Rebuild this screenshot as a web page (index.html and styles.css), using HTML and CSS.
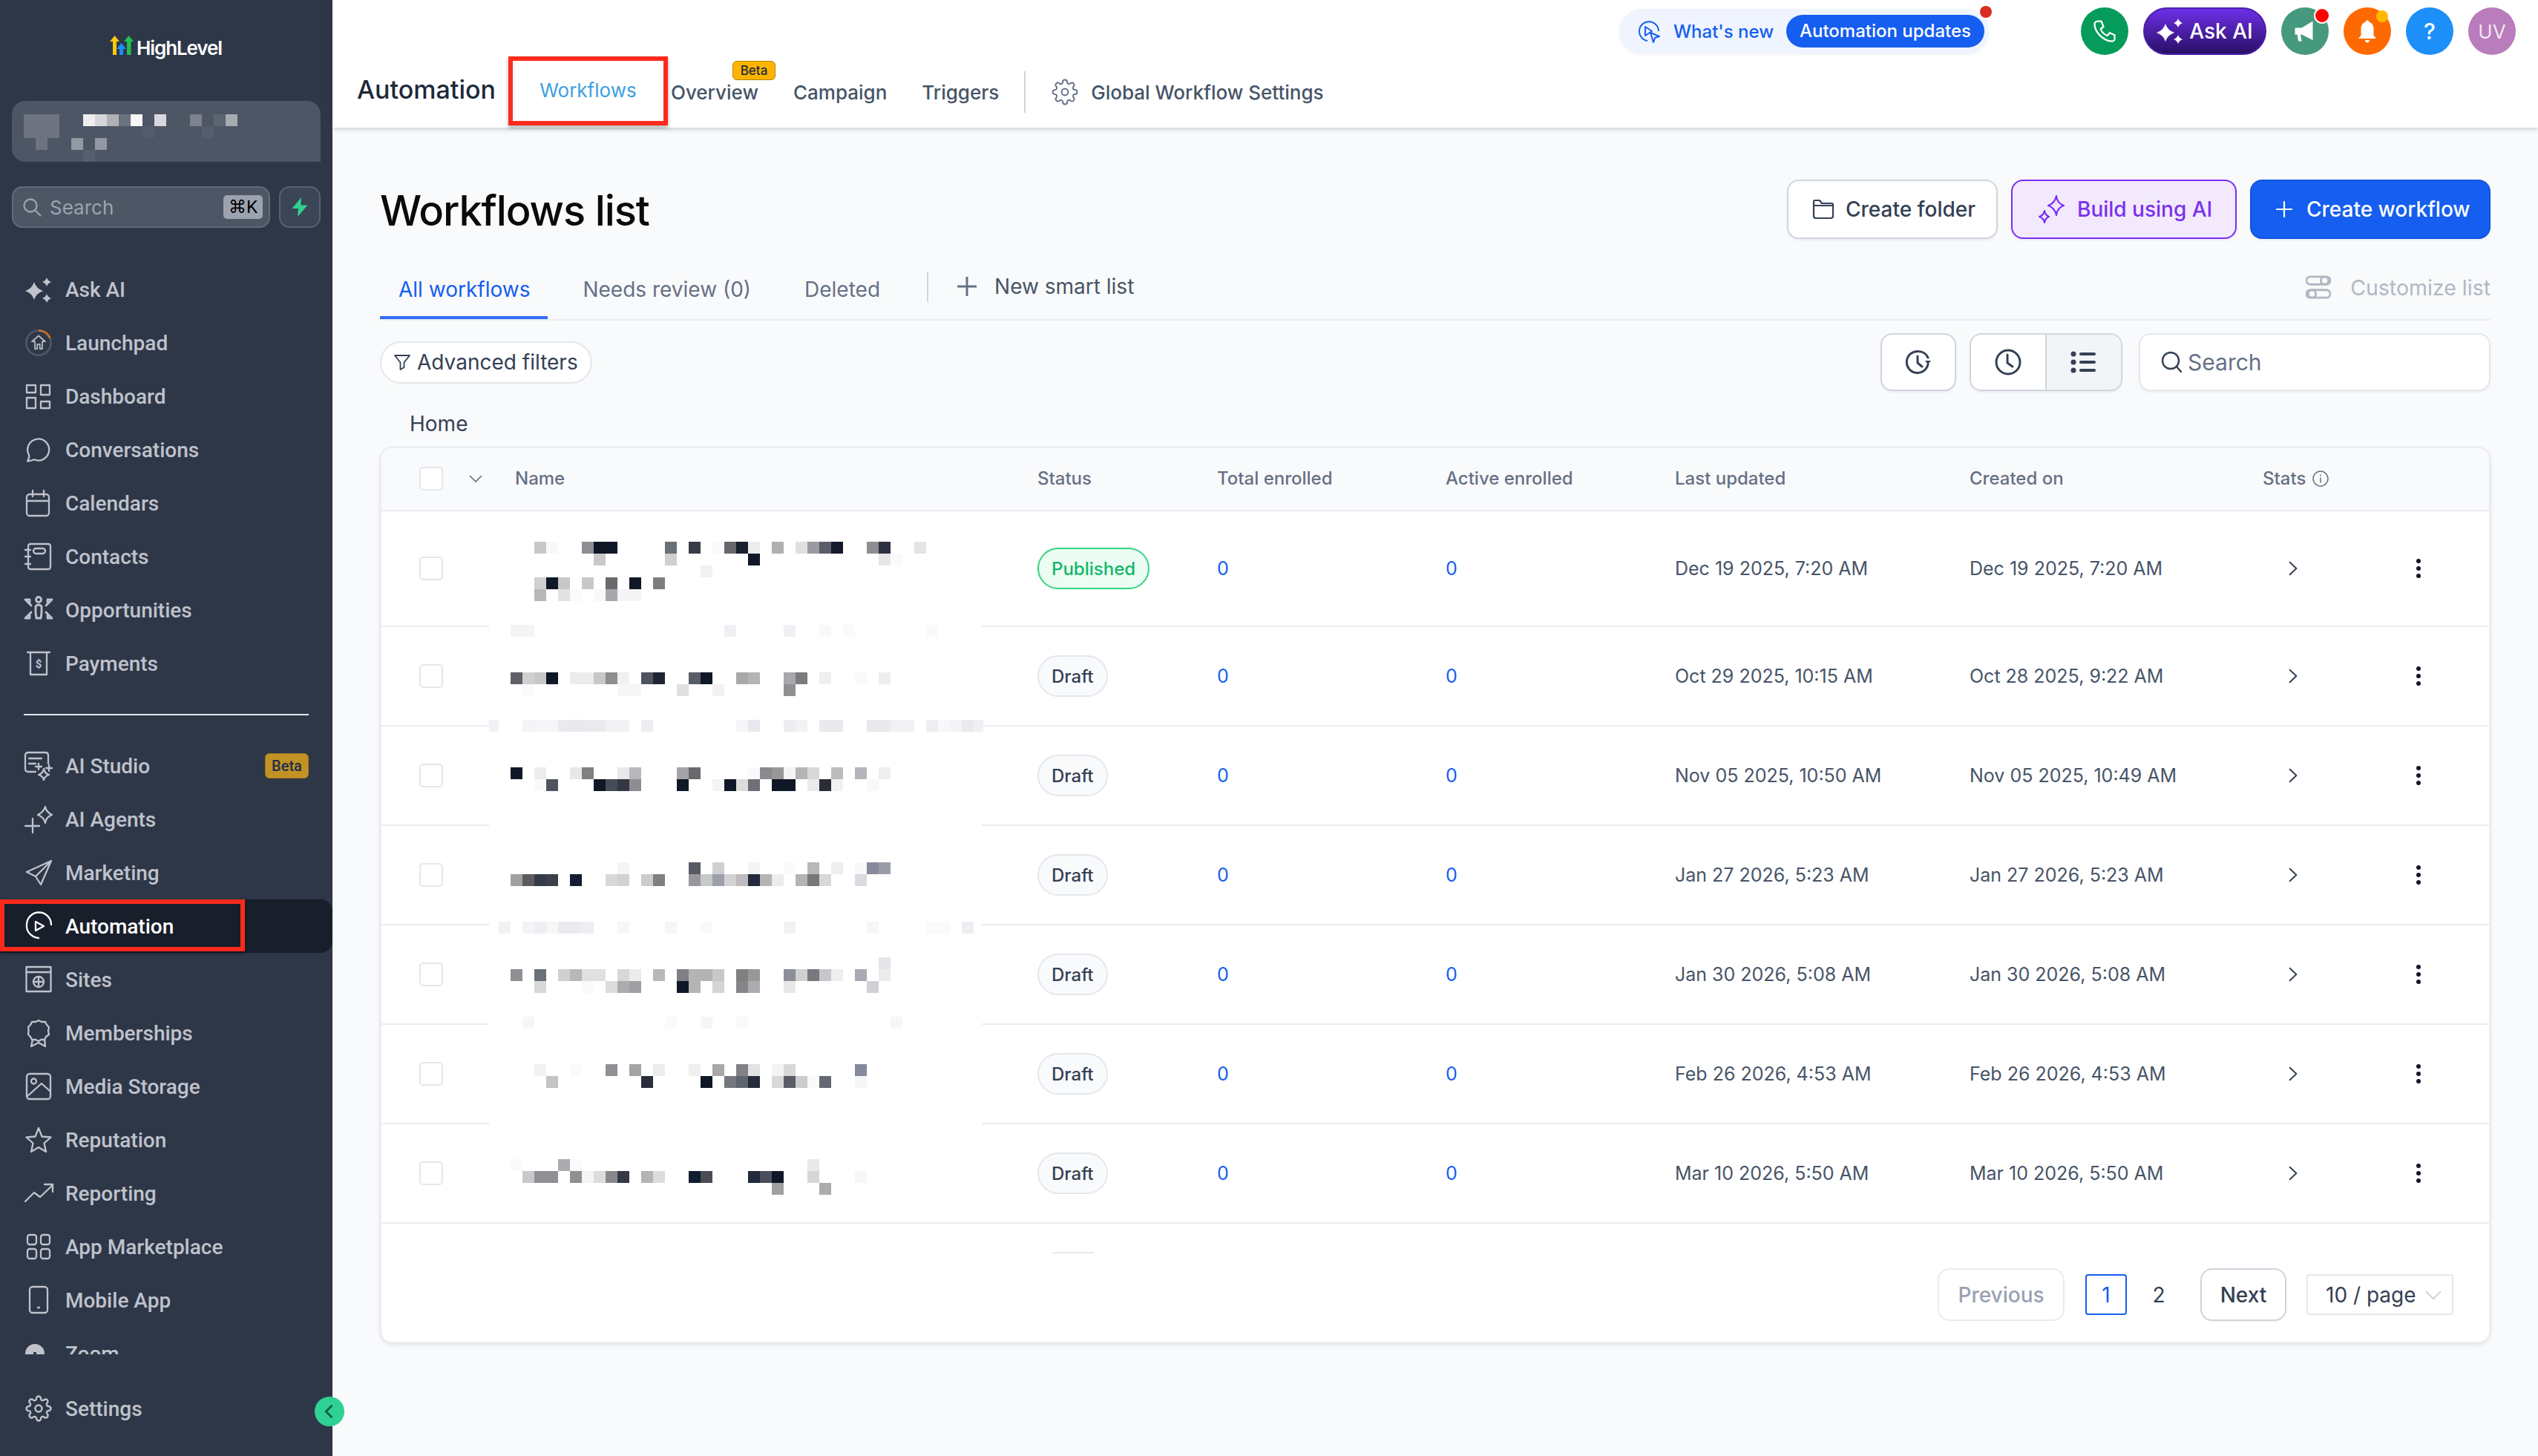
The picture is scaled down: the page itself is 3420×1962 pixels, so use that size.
FILE: index.html
```html
<!DOCTYPE html>
<html lang="en">
<head>
<meta charset="utf-8">
<title>Workflows list</title>
<link rel="stylesheet" href="styles.css">
</head>
<body>
<svg class="defs" aria-hidden="true">
  <symbol id="gear" viewBox="0 0 24 24"><circle cx="12" cy="12" r="3"/><path d="M19.4 15a1.65 1.65 0 0 0 .33 1.82l.06.06a2 2 0 0 1 0 2.83 2 2 0 0 1-2.83 0l-.06-.06a1.65 1.65 0 0 0-1.82-.33 1.65 1.65 0 0 0-1 1.51V21a2 2 0 0 1-2 2 2 2 0 0 1-2-2v-.09A1.65 1.65 0 0 0 9 19.4a1.65 1.65 0 0 0-1.82.33l-.06.06a2 2 0 0 1-2.83 0 2 2 0 0 1 0-2.83l.06-.06a1.65 1.65 0 0 0 .33-1.82 1.65 1.65 0 0 0-1.51-1H3a2 2 0 0 1-2-2 2 2 0 0 1 2-2h.09A1.65 1.65 0 0 0 4.6 9a1.65 1.65 0 0 0-.33-1.82l-.06-.06a2 2 0 0 1 0-2.83 2 2 0 0 1 2.83 0l.06.06a1.65 1.65 0 0 0 1.82.33H9a1.65 1.65 0 0 0 1-1.51V3a2 2 0 0 1 2-2 2 2 0 0 1 2 2v.09a1.65 1.65 0 0 0 1 1.51 1.65 1.65 0 0 0 1.82-.33l.06-.06a2 2 0 0 1 2.83 0 2 2 0 0 1 0 2.83l-.06.06a1.65 1.65 0 0 0-.33 1.82V9a1.65 1.65 0 0 0 1.51 1H21a2 2 0 0 1 2 2 2 2 0 0 1-2 2h-.09a1.65 1.65 0 0 0-1.51 1z"/></symbol>
  <symbol id="chev-r" viewBox="0 0 20 20"><path d="M6 2.500 14 10 6 17.500"/></symbol>
  <symbol id="dots" viewBox="0 0 8 28"><circle cx="4" cy="4" r="3"/><circle cx="4" cy="14" r="3"/><circle cx="4" cy="24" r="3"/></symbol>
</svg>
<div class="app">
  <aside class="sidebar">
    <div class="logo">
      <svg class="logo-mark" viewBox="0 0 34 28"><path fill="#fdc70c" d="M0 8 6.500 0 13 8H9V26H4V8Z"/><path fill="#1c8ff8" d="M9 18 15.500 10 22 18H18V26H13V18Z"/><path fill="#1fc24f" d="M19 8 25.500 0 32 8H28.500V26H23V8Z"/></svg>
      <span class="logo-text">HighLevel</span>
    </div>
    <div class="account">
      <svg class="mosaic" viewBox="16 136 416 82" width="416" height="82"><path fill="#6d7480" d="M32 154H80V186H64V202H48V186H32Z"/><rect x="112" y="154" fill="#eeeeee"/><rect x="128" y="154" fill="#d5d6d9"/><rect x="144" y="154" fill="#b0b1b5"/><rect x="160" y="154" fill="#6a7280"/><rect x="176" y="154" fill="#f8f8f8"/><rect x="208" y="154" fill="#d8d9dc"/><rect x="256" y="154" fill="#7d828c"/><rect x="288" y="154" fill="#5c6472"/><rect x="304" y="154" fill="#a8abb0"/><rect x="192" y="170" fill="#535c6a"/><rect x="272" y="170" fill="#555e6c"/><rect x="96" y="186" fill="#9399a2"/><rect x="128" y="186" fill="#9399a2"/><rect x="112" y="202" fill="#555e6c"/></svg>
    </div>
    <div class="quick">
      <div class="side-search">
        <svg class="i-stroke side-search-icon" viewBox="0 0 26 26"><circle cx="11" cy="11" r="8.500"/><path d="m17.500 17.500 7 7"/></svg>
        <span class="side-search-text">Search</span>
        <kbd class="kbd">⌘K</kbd>
      </div>
      <div class="bolt-btn"><svg viewBox="0 0 22 26" width="22" height="26"><path fill="#2fd18f" d="M13 0 0.500 15H9L8 26 21.500 10.500H12.500Z"/></svg></div>
    </div>
    <nav class="nav">
      <a class="nav-item"><svg class="nav-icon i-fill" viewBox="0 0 36 36"><path d="M12 8 Q15 17 24 20 Q15 23 12 32 Q9 23 0 20 Q9 17 12 8Z"/><path d="M29 2 Q30.500 6.500 35 8 Q30.500 9.500 29 14 Q27.500 9.500 23 8 Q27.500 6.500 29 2Z"/><path d="M29 24 Q30.500 28.500 35 30 Q30.500 31.500 29 36 Q27.500 31.500 23 30 Q27.500 28.500 29 24Z"/></svg><span>Ask AI</span></a>
      <a class="nav-item"><svg class="nav-icon launch" viewBox="0 0 40 40"><circle cx="20" cy="20" r="18.500" stroke="#4d5665"/><path d="M20 1.500A18.500 18.500 0 0 1 37.200 13" stroke="#c46e2c"/><path d="M20 9.500 30 18H25.500V29H22V22H18V29H14.500V18H10Z" stroke="#b6bac4" class="launch-arrow"/></svg><span>Launchpad</span></a>
      <a class="nav-item"><svg class="nav-icon i-stroke" viewBox="0 0 36 36"><rect x="2" y="3" width="12" height="10"/><rect x="21" y="3" width="12" height="13"/><rect x="2" y="20" width="12" height="14"/><rect x="21" y="25" width="12" height="9"/></svg><span>Dashboard</span></a>
      <a class="nav-item"><svg class="nav-icon i-stroke" viewBox="0 0 36 36"><path d="M3 33.500C5 30 5.500 27 5 25A14.500 14.500 0 1 1 12 31.300C9 32.500 6 33.300 3 33.500Z"/></svg><span>Conversations</span></a>
      <a class="nav-item"><svg class="nav-icon i-stroke" viewBox="0 0 36 36"><rect x="2" y="6" width="30" height="29" rx="4"/><path d="M2 15H32M10 1V9M25 1V9"/></svg><span>Calendars</span></a>
      <a class="nav-item"><svg class="nav-icon i-stroke" viewBox="0 0 36 36"><rect x="4" y="1" width="30" height="34" rx="3"/><rect x="11" y="7" width="16" height="7" rx="3.500"/><path d="M0 9H7M0 18H7M0 28H7"/></svg><span>Contacts</span></a>
      <a class="nav-item"><svg class="nav-icon i-stroke opp" viewBox="0 0 36 36"><circle cx="18" cy="4" r="3.500"/><path d="M14 13Q18 9 22 13V22L21 29H15L14 22Z"/><path d="M0 4H6V10M1 5 8 12M36 4H30V10M35 5 28 12M0 29H6V23M1 28 8 21M36 29H30V23M35 28 28 21"/></svg><span>Opportunities</span></a>
      <a class="nav-item"><svg class="nav-icon i-stroke" viewBox="0 0 36 36"><path d="M3 3H33M7 3V33H29V3"/><text class="pay-sign" x="18" y="24" text-anchor="middle">$</text></svg><span>Payments</span></a>
      <div class="nav-divider"></div>
      <a class="nav-item"><svg class="nav-icon i-stroke" viewBox="0 0 36 36"><path d="M14 26H4Q0 26 0 22V4Q0 0 4 0H27Q31 0 31 4V15"/><path d="M5 8H22M5 15H14"/><path d="M18 15V23M14 19H22M32 17V25M28 21H36M25 22Q26 28 32 30Q26 32 25 37Q24 32 18 30Q24 28 25 22Z"/></svg><span>AI Studio</span><span class="side-beta">Beta</span></a>
      <a class="nav-item"><svg class="nav-icon i-stroke" viewBox="0 0 36 36"><path d="M10 17V36M0 27H19"/><path d="M27 1Q28 8 36 12Q28 15 27 23Q25 15 17 12Q25 8 27 1Z"/></svg><span>AI Agents</span></a>
      <a class="nav-item"><svg class="nav-icon i-stroke" viewBox="0 0 36 36"><path d="M35 2 2 17 14 23 21 34ZM35 2 14 23"/></svg><span>Marketing</span></a>
      <a class="nav-item is-active"><svg class="nav-icon i-stroke" viewBox="0 0 36 36"><path d="M35 16A16.500 16.500 0 0 0 2 16C1 25 8 33 18 34"/><path d="M14 12V24L25 18Z"/></svg><span>Automation</span><span class="side-mark"></span></a>
      <a class="nav-item"><svg class="nav-icon i-stroke" viewBox="0 0 36 36"><rect x="1.500" y="1" width="33" height="33"/><path d="M1.500 8H34.500"/><circle cx="18" cy="21" r="7"/><path d="M11 21H25M18 14V28"/></svg><span>Sites</span></a>
      <a class="nav-item"><svg class="nav-icon i-stroke" viewBox="0 0 36 36"><path d="M18 1 22 3 27 3 29 7 32 10 31 15 32 20 28 23 26 27H21L18 29 14 27H9L7 23 4 20 4.500 15 4 10 7 7 9 3 14 3Z"/><path d="M10 27 8 36 18 31 27 36 26 27"/></svg><span>Memberships</span></a>
      <a class="nav-item"><svg class="nav-icon i-stroke" viewBox="0 0 36 36"><rect x="2" y="1" width="32" height="34" rx="4"/><circle cx="11.500" cy="11" r="3.500"/><path d="M3 31 22 14 33 24"/></svg><span>Media Storage</span></a>
      <a class="nav-item"><svg class="nav-icon i-stroke" viewBox="0 0 36 36"><path d="M18 2 22.500 13.500 34.500 14.500 25.500 22.500 28 34 18 28 8 34 10.500 22.500 1.500 14.500 13.500 13.500Z"/></svg><span>Reputation</span></a>
      <a class="nav-item"><svg class="nav-icon i-stroke" viewBox="0 0 36 36"><path d="M0 29 12 17 20 23 37 7M26 6H37V16"/></svg><span>Reporting</span></a>
      <a class="nav-item"><svg class="nav-icon i-stroke" viewBox="0 0 36 36"><rect x="3" y="2" width="12" height="13" rx="3"/><rect x="21" y="2" width="12" height="13" rx="3"/><rect x="3" y="21" width="12" height="13" rx="3"/><rect x="21" y="21" width="12" height="13" rx="3"/></svg><span>App Marketplace</span></a>
      <a class="nav-item"><svg class="nav-icon i-stroke" viewBox="0 0 36 36"><rect x="6" y="0" width="24" height="35" rx="4"/><path d="M17 28H19"/></svg><span>Mobile App</span></a>
      <a class="nav-item"><svg class="nav-icon i-fill" viewBox="0 0 36 36"><path fill-rule="evenodd" d="M13 5A13 13 0 1 0 13 31 13 13 0 0 0 13 5ZM11 16H15V20H11Z"/></svg><span>Zoom</span></a>
    </nav>
    <a class="nav-item nav-settings"><svg class="nav-icon i-stroke gear-thin" viewBox="0 0 24 24"><use href="#gear"/></svg><span>Settings</span></a>
    <button class="collapse" type="button" aria-label="Collapse"><svg viewBox="0 0 16 24" width="12" height="20"><path d="M13 2 3 12 13 22"/></svg></button>
  </aside>

  <div class="main">
    <header class="topbar">
      <div class="top-row">
        <div class="news">
          <svg class="news-icon" viewBox="0 0 32 32"><path d="M29 16A13 13 0 1 0 14 29"/><path d="M11 10V22L20 16Z"/><path d="M18 18 30 23 24 25 22 31Z"/></svg>
          <span class="news-label">What's new</span>
          <span class="news-pill">Automation updates</span>
          <span class="news-dot"></span>
        </div>
        <div class="actions">
          <span class="round round-phone"><svg viewBox="0 0 24 24" width="36" height="36"><path d="M6 3 9 3 11 8 8.500 10C9.500 13 11.500 15 14.500 16L16.500 13.500 21 15.500V19C21 20 20 21 19 21 11 21 3 13 3 5.500 3 4 4.500 3 6 3Z"/></svg></span>
          <span class="ask-ai"><svg viewBox="0 0 36 36" width="36" height="36"><path d="M12 8 Q15 17 24 20 Q15 23 12 32 Q9 23 0 20 Q9 17 12 8Z"/><path d="M29 1 Q30.500 5.500 35 7 Q30.500 8.500 29 13 Q27.500 8.500 23 7 Q27.500 5.500 29 1Z"/><path d="M29 23 Q30.500 27.500 35 29 Q30.500 30.500 29 35 Q27.500 30.500 23 29 Q27.500 27.500 29 23Z"/></svg>Ask AI</span>
          <span class="round round-mega"><svg viewBox="0 0 24 24" width="36" height="36"><path d="M3 9H9L19 3V20L9 15H8L9 21H6L5 15H3Z"/></svg><span class="mark mark-red"></span></span>
          <span class="round round-bell"><svg viewBox="0 0 24 24" width="34" height="38"><path d="M12 1.500C13 1.500 13.500 2.300 13.500 3.200 16.500 4 18 6.500 18 10V16L20.500 19H3.500L6 16V10C6 6.500 7.500 4 10.500 3.200 10.500 2.300 11 1.500 12 1.500ZM9.800 20.500H14.200C14 22 13 23 12 23S10 22 9.800 20.500Z"/></svg><span class="mark mark-yellow"></span></span>
          <span class="round round-help">?</span>
          <span class="round round-user">UV</span>
        </div>
      </div>
      <div class="nav-row">
        <span class="app-title">Automation</span>
        <a class="tab-marked">Workflows</a>
        <a class="top-link top-link-first">Overview<span class="top-beta">Beta</span></a>
        <a class="top-link">Campaign</a>
        <a class="top-link">Triggers</a>
        <span class="top-sep"></span>
        <svg class="top-gear" viewBox="0 0 24 24"><use href="#gear"/></svg>
        <a class="top-settings">Global Workflow Settings</a>
      </div>
    </header>

    <main class="content">
      <div class="page-head">
        <h1 class="page-title">Workflows list</h1>
        <div class="page-actions">
          <button class="btn btn-plain" type="button"><svg class="btn-icon" viewBox="0 0 30 30"><path d="M2 24V5Q2 3 4 3H10L13 7H26Q28 7 28 9V24Q28 27 25 27H5Q2 27 2 24ZM2 10H28"/></svg>Create folder</button>
          <button class="btn btn-ai" type="button"><svg class="btn-icon" viewBox="0 0 38 38"><path d="M25 1Q26 11 35 14Q26 17 25 27Q23 17 14 14Q23 11 25 1Z"/><path d="M9 21Q10 27 15 29Q10 31 9 37Q8 31 2 29Q8 27 9 21Z"/></svg>Build using AI</button>
          <button class="btn btn-primary" type="button"><svg class="btn-icon" viewBox="0 0 24 24"><path d="M12 2V22M2 12H22"/></svg>Create workflow</button>
        </div>
      </div>

      <div class="tabs">
        <a class="tab is-current">All workflows</a>
        <a class="tab">Needs review (0)</a>
        <a class="tab">Deleted</a>
        <span class="tab-sep"></span>
        <a class="tab-add"><svg viewBox="0 0 28 28" width="28" height="28"><path d="M14 1V27M1 14H27"/></svg>New smart list</a>
        <a class="customize"><svg viewBox="0 0 36 36" width="34" height="34"><rect x="1" y="3" width="34" height="11" rx="5.500"/><circle cx="27" cy="8.500" r="5.500"/><rect x="1" y="22" width="34" height="11" rx="5.500"/><circle cx="9" cy="27.500" r="5.500"/></svg>Customize list</a>
      </div>

      <div class="toolbar">
        <button class="filter-pill" type="button"><svg viewBox="0 0 24 24" width="24" height="24"><path d="M2 3H22L14.500 12.500V19L9.500 22V12.500Z"/></svg>Advanced filters</button>
        <div class="toolbar-right">
          <button class="icon-btn" type="button"><svg class="clock" viewBox="0 0 36 36"><path d="M31 21A14.500 14.500 0 1 1 18 3.500C24 3.500 29 7 31 12"/><path d="M17 10V19L23 24"/><path d="M27 16 31 21 35 16" class="filled"/></svg></button>
          <div class="segmented">
            <button class="seg" type="button"><svg class="clock" viewBox="0 0 36 36"><circle cx="18" cy="18" r="16"/><path d="M17 8V19L24 24"/></svg></button>
            <button class="seg is-on" type="button"><svg class="list-i" viewBox="0 0 36 36"><circle cx="4" cy="7" r="3.500"/><circle cx="4" cy="18" r="3.500"/><circle cx="4" cy="29" r="3.500"/><rect x="12" y="5" width="22" height="4" rx="2"/><rect x="12" y="16" width="22" height="4" rx="2"/><rect x="12" y="27" width="22" height="4" rx="2"/></svg></button>
          </div>
          <div class="search"><svg viewBox="0 0 28 30" width="28" height="30"><circle cx="13" cy="13" r="11"/><path d="m21 21 6 7"/></svg><span>Search</span></div>
        </div>
      </div>

      <div class="crumb">Home</div>

      <section class="card">
        <div class="row row-head">
          <div class="select"><span class="check"></span><svg class="head-chev" viewBox="0 0 18 12"><path d="M1 2 9 10 17 2"/></svg></div>
          <div>Name</div><div>Status</div><div>Total enrolled</div><div>Active enrolled</div><div>Last updated</div><div>Created on</div>
          <div class="stats-head">Stats<svg viewBox="0 0 24 24" width="24" height="24"><circle cx="12" cy="12" r="10"/><path d="M12 11V17M12 7V8"/></svg></div><div></div>
        </div>
        <div class="row row-tall"><div class="select"><span class="check"></span></div><div></div><div><span class="pill pill-pub">Published</span></div><div class="num">0</div><div class="num">0</div><div>Dec 19 2025, 7:20 AM</div><div>Dec 19 2025, 7:20 AM</div><div><svg class="go" viewBox="0 0 20 20"><use href="#chev-r"/></svg></div><div><svg class="more" viewBox="0 0 8 28"><use href="#dots"/></svg></div></div>
        <div class="row"><div class="select"><span class="check"></span></div><div></div><div><span class="pill">Draft</span></div><div class="num">0</div><div class="num">0</div><div>Oct 29 2025, 10:15 AM</div><div>Oct 28 2025, 9:22 AM</div><div><svg class="go" viewBox="0 0 20 20"><use href="#chev-r"/></svg></div><div><svg class="more" viewBox="0 0 8 28"><use href="#dots"/></svg></div></div>
        <div class="row"><div class="select"><span class="check"></span></div><div></div><div><span class="pill">Draft</span></div><div class="num">0</div><div class="num">0</div><div>Nov 05 2025, 10:50 AM</div><div>Nov 05 2025, 10:49 AM</div><div><svg class="go" viewBox="0 0 20 20"><use href="#chev-r"/></svg></div><div><svg class="more" viewBox="0 0 8 28"><use href="#dots"/></svg></div></div>
        <div class="row"><div class="select"><span class="check"></span></div><div></div><div><span class="pill">Draft</span></div><div class="num">0</div><div class="num">0</div><div>Jan 27 2026, 5:23 AM</div><div>Jan 27 2026, 5:23 AM</div><div><svg class="go" viewBox="0 0 20 20"><use href="#chev-r"/></svg></div><div><svg class="more" viewBox="0 0 8 28"><use href="#dots"/></svg></div></div>
        <div class="row"><div class="select"><span class="check"></span></div><div></div><div><span class="pill">Draft</span></div><div class="num">0</div><div class="num">0</div><div>Jan 30 2026, 5:08 AM</div><div>Jan 30 2026, 5:08 AM</div><div><svg class="go" viewBox="0 0 20 20"><use href="#chev-r"/></svg></div><div><svg class="more" viewBox="0 0 8 28"><use href="#dots"/></svg></div></div>
        <div class="row"><div class="select"><span class="check"></span></div><div></div><div><span class="pill">Draft</span></div><div class="num">0</div><div class="num">0</div><div>Feb 26 2026, 4:53 AM</div><div>Feb 26 2026, 4:53 AM</div><div><svg class="go" viewBox="0 0 20 20"><use href="#chev-r"/></svg></div><div><svg class="more" viewBox="0 0 8 28"><use href="#dots"/></svg></div></div>
        <div class="row"><div class="select"><span class="check"></span></div><div></div><div><span class="pill">Draft</span></div><div class="num">0</div><div class="num">0</div><div>Mar 10 2026, 5:50 AM</div><div>Mar 10 2026, 5:50 AM</div><div><svg class="go" viewBox="0 0 20 20"><use href="#chev-r"/></svg></div><div><svg class="more" viewBox="0 0 8 28"><use href="#dots"/></svg></div></div>

        <div class="pager">
          <button class="page-btn is-disabled" type="button">Previous</button>
          <button class="page-num is-current" type="button">1</button>
          <button class="page-num" type="button">2</button>
          <button class="page-btn page-next" type="button">Next</button>
          <div class="per-page">10 / page<svg viewBox="0 0 22 14" width="22" height="14"><path d="M1 2 11 12 21 2"/></svg></div>
        </div>

        <svg class="mosaic redaction" viewBox="659 604 830 1100" width="830" height="1100" aria-hidden="true">
          <path fill="#ffffff" d="M659 730H1323V1530H659Z"/>
          <path fill="#e8e8ee" d="M1418 1687H1474V1689H1418Z"/>
          <rect x="720" y="730" fill="#c8c8c8"/><rect x="736" y="730" fill="#f8f8f8"/><rect x="784" y="730" fill="#8e8e93"/><rect x="800" y="730" fill="#101828"/><rect x="816" y="730" fill="#101828"/><rect x="896" y="730" fill="#6b7078"/><rect x="928" y="730" fill="#3a3d47"/><rect x="960" y="730" fill="#fafafa"/><rect x="976" y="730" fill="#66666d"/><rect x="992" y="730" fill="#1a2030"/><rect x="1008" y="730" fill="#ececec"/><rect x="1040" y="730" fill="#b0b0b0"/><rect x="1072" y="730" fill="#e0e0e0"/><rect x="1088" y="730" fill="#9a9aa0"/><rect x="1104" y="730" fill="#5a5c68"/><rect x="1120" y="730" fill="#141a2c"/><rect x="1168" y="730" fill="#8e8e90"/><rect x="1184" y="730" fill="#2c3040"/><rect x="1232" y="730" fill="#e4e4e4"/>
          <rect x="800" y="746" fill="#c8c8cc"/><rect x="896" y="746" fill="#d0d0d0"/><rect x="1008" y="746" fill="#101828"/><rect x="1184" y="746" fill="#e6e6e6"/><rect x="1200" y="746" fill="#fafafa"/>
          <rect x="944" y="762" fill="#f2f2f4"/>
          <rect x="720" y="778" fill="#d0d0d0"/><rect x="736" y="778" fill="#101828"/><rect x="752" y="778" fill="#c8c8c8"/><rect x="784" y="778" fill="#c8c8c8"/><rect x="816" y="778" fill="#6a6a6e"/><rect x="848" y="778" fill="#101828"/><rect x="880" y="778" fill="#7e7e82"/>
          <rect x="720" y="794" fill="#b8b8b8"/><rect x="752" y="794" fill="#e2e2e2"/><rect x="768" y="794" fill="#fafafa"/><rect x="800" y="794" fill="#f8f8f8"/><rect x="816" y="794" fill="#a8a8ac"/><rect x="832" y="794" fill="#f4f4f4"/><rect x="848" y="794" fill="#f4f4f4"/>
          <rect x="688" y="842" fill="#f4f4f6"/><rect x="704" y="842" fill="#f4f4f6"/><rect x="976" y="842" fill="#f0f0f4"/><rect x="1056" y="842" fill="#f0f0f4"/><rect x="1104" y="842" fill="#f8f8fa"/><rect x="1136" y="842" fill="#fafafa"/><rect x="1248" y="842" fill="#fafafa"/>
          <rect x="688" y="906" fill="#606066"/><rect x="704" y="906" fill="#d0d0d0"/><rect x="720" y="906" fill="#c8c8c8"/><rect x="736" y="906" fill="#101828"/><rect x="768" y="906" fill="#ececec"/><rect x="784" y="906" fill="#ececec"/><rect x="800" y="906" fill="#c8c8c8"/><rect x="816" y="906" fill="#8e8e90"/><rect x="832" y="906" fill="#f0f0f0"/><rect x="864" y="906" fill="#505460"/><rect x="880" y="906" fill="#1e2432"/><rect x="928" y="906" fill="#5a5c66"/><rect x="944" y="906" fill="#101828"/><rect x="992" y="906" fill="#a8a8a8"/><rect x="1008" y="906" fill="#b4b4b8"/><rect x="1056" y="906" fill="#a8a8ac"/><rect x="1072" y="906" fill="#7c7c80"/><rect x="1104" y="906" fill="#efefef"/><rect x="1152" y="906" fill="#fafafa"/><rect x="1184" y="906" fill="#eeeeef"/>
          <rect x="704" y="922" fill="#fafafa"/><rect x="832" y="922" fill="#f6f6f6"/><rect x="848" y="922" fill="#f6f6f6"/><rect x="912" y="922" fill="#e0e0e0"/><rect x="960" y="922" fill="#f2f2f2"/><rect x="1056" y="922" fill="#909092"/>
          <rect x="659" y="970" class="thin" fill="#f2f2f6"/><rect x="704" y="970" fill="#f4f4f6"/><rect x="720" y="970" fill="#f6f6f8"/><rect x="736" y="970" fill="#f6f6f8"/><rect x="752" y="970" fill="#eaeaee"/><rect x="768" y="970" fill="#e8e8ee"/><rect x="784" y="970" fill="#eaeaee"/><rect x="800" y="970" fill="#eaeaee"/><rect x="816" y="970" fill="#f2f2f4"/><rect x="832" y="970" fill="#f2f2f4"/><rect x="864" y="970" fill="#eeeef2"/><rect x="992" y="970" fill="#f6f6f8"/><rect x="1008" y="970" fill="#e8e8ee"/><rect x="1056" y="970" fill="#ecedf1"/><rect x="1072" y="970" fill="#f2f2f4"/><rect x="1104" y="970" fill="#e9e9ee"/><rect x="1120" y="970" fill="#e9e9ee"/><rect x="1168" y="970" fill="#e9e9ee"/><rect x="1184" y="970" fill="#e9e9ee"/><rect x="1200" y="970" fill="#f2f2f4"/><rect x="1216" y="970" fill="#f2f2f4"/><rect x="1248" y="970" fill="#eeeef2"/><rect x="1264" y="970" fill="#f8f8fa"/><rect x="1280" y="970" fill="#f4f4f6"/><rect x="1296" y="970" fill="#e9e9ee"/><rect x="1312" y="970" class="thin" fill="#f0f0f4"/>
          <rect x="688" y="1034" fill="#101828"/><rect x="720" y="1034" fill="#ececec"/><rect x="768" y="1034" fill="#e8e8e8"/><rect x="784" y="1034" fill="#808080"/><rect x="832" y="1034" fill="#e8e8e8"/><rect x="848" y="1034" fill="#b8b8bc"/><rect x="912" y="1034" fill="#a4a4a8"/><rect x="928" y="1034" fill="#6a6a6e"/><rect x="1008" y="1034" fill="#fafafa"/><rect x="1024" y="1034" fill="#8a8a8e"/><rect x="1040" y="1034" fill="#989898"/><rect x="1056" y="1034" fill="#f4f4f4"/><rect x="1072" y="1034" fill="#b4b4b4"/><rect x="1088" y="1034" fill="#d8d8d8"/><rect x="1120" y="1034" fill="#bcbcbc"/><rect x="1152" y="1034" fill="#b4b4ba"/><rect x="1184" y="1034" fill="#eeeeef"/>
          <rect x="720" y="1050" fill="#fafafa"/><rect x="736" y="1050" fill="#50545f"/><rect x="800" y="1050" fill="#101828"/><rect x="816" y="1050" fill="#444c58"/><rect x="832" y="1050" fill="#343844"/><rect x="848" y="1050" fill="#8e8e92"/><rect x="912" y="1050" fill="#101828"/><rect x="960" y="1050" fill="#f4f4f4"/><rect x="976" y="1050" fill="#101828"/><rect x="992" y="1050" fill="#dcdcdc"/><rect x="1008" y="1050" fill="#6e7078"/><rect x="1040" y="1050" fill="#101828"/><rect x="1056" y="1050" fill="#101828"/><rect x="1088" y="1050" fill="#eaeaea"/><rect x="1104" y="1050" fill="#2a2c38"/><rect x="1120" y="1050" fill="#f2f2f2"/><rect x="1168" y="1050" fill="#f8f8f8"/>
          <rect x="832" y="1162" fill="#f4f4f4"/><rect x="928" y="1162" fill="#585a64"/><rect x="960" y="1162" fill="#d0d0d0"/><rect x="1008" y="1162" fill="#f4f4f4"/><rect x="1056" y="1162" fill="#fafafa"/><rect x="1088" y="1162" fill="#b8b8b8"/><rect x="1120" y="1162" fill="#eeeeee"/><rect x="1152" y="1162" fill="#f8f8f8"/><rect x="1168" y="1162" fill="#868a9a"/><rect x="1184" y="1162" fill="#9a9ca8"/>
          <rect x="688" y="1178" fill="#a0a0a0"/><rect x="704" y="1178" fill="#5c5c60"/><rect x="720" y="1178" fill="#343a4a"/><rect x="736" y="1178" fill="#3c404c"/><rect x="768" y="1178" fill="#141e30"/><rect x="816" y="1178" fill="#d8d8d8"/><rect x="832" y="1178" fill="#d2d2d4"/><rect x="864" y="1178" fill="#cccccc"/><rect x="880" y="1178" fill="#808084"/><rect x="928" y="1178" fill="#98989c"/><rect x="944" y="1178" fill="#c8c8c8"/><rect x="960" y="1178" fill="#9ca0aa"/><rect x="976" y="1178" fill="#d2d2d4"/><rect x="992" y="1178" fill="#bcbcc0"/><rect x="1008" y="1178" fill="#222a3c"/><rect x="1024" y="1178" fill="#b4b4b4"/><rect x="1040" y="1178" fill="#ececec"/><rect x="1072" y="1178" fill="#b4b4b4"/><rect x="1088" y="1178" fill="#78787c"/><rect x="1104" y="1178" fill="#d8d8da"/><rect x="1152" y="1178" fill="#d8dce0"/>
          <rect x="672" y="1242" fill="#f2f2f4"/><rect x="704" y="1242" fill="#f4f4f6"/><rect x="720" y="1242" fill="#eeeef2"/><rect x="736" y="1242" fill="#f6f6f8"/><rect x="752" y="1242" fill="#ebebef"/><rect x="768" y="1242" fill="#ebebef"/><rect x="784" y="1242" fill="#eeeef2"/><rect x="832" y="1242" fill="#f6f6f8"/><rect x="896" y="1242" fill="#f6f6f8"/><rect x="944" y="1242" fill="#f9f9f9"/><rect x="1056" y="1242" fill="#f2f2f4"/><rect x="1168" y="1242" fill="#f6f6f8"/><rect x="1248" y="1242" fill="#fafafa"/><rect x="1264" y="1242" fill="#fafafa"/><rect x="1296" y="1242" fill="#eeeef2"/>
          <rect x="1184" y="1290" fill="#e6e6ea"/>
          <rect x="688" y="1306" fill="#909094"/><rect x="720" y="1306" fill="#6c7078"/><rect x="752" y="1306" fill="#d0d0d0"/><rect x="768" y="1306" fill="#b8b8bc"/><rect x="784" y="1306" fill="#e0e0e0"/><rect x="800" y="1306" fill="#e0e0e0"/><rect x="832" y="1306" fill="#d8d8d8"/><rect x="848" y="1306" fill="#ececec"/><rect x="880" y="1306" fill="#b8b8b8"/><rect x="912" y="1306" fill="#808084"/><rect x="928" y="1306" fill="#b4b4b4"/><rect x="944" y="1306" fill="#b4b4b4"/><rect x="960" y="1306" fill="#c8c8cc"/><rect x="992" y="1306" fill="#808080"/><rect x="1008" y="1306" fill="#98989a"/><rect x="1056" y="1306" fill="#8c8e98"/><rect x="1072" y="1306" fill="#d0d0d0"/><rect x="1088" y="1306" fill="#78787e"/><rect x="1104" y="1306" fill="#c8c8cc"/><rect x="1120" y="1306" fill="#eeeeee"/><rect x="1152" y="1306" fill="#a8aab4"/><rect x="1184" y="1306" fill="#ececee"/>
          <rect x="720" y="1322" fill="#d8d8d8"/><rect x="784" y="1322" fill="#fafafa"/><rect x="816" y="1322" fill="#dcdcdc"/><rect x="832" y="1322" fill="#acacb0"/><rect x="848" y="1322" fill="#a0a0a4"/><rect x="912" y="1322" fill="#101828"/><rect x="928" y="1322" fill="#b4b4b4"/><rect x="960" y="1322" fill="#d4d4d6"/><rect x="992" y="1322" fill="#868688"/><rect x="1008" y="1322" fill="#acacb0"/><rect x="1056" y="1322" fill="#e8e8e8"/><rect x="1168" y="1322" fill="#d0d0d6"/>
          <rect x="704" y="1370" fill="#f6f6f8"/><rect x="896" y="1370" fill="#fafafa"/><rect x="944" y="1370" fill="#f6f6f8"/><rect x="992" y="1370" fill="#fafafa"/><rect x="1200" y="1370" fill="#f6f6f8"/>
          <rect x="720" y="1434" fill="#f2f2f2"/><rect x="768" y="1434" fill="#fafafa"/><rect x="816" y="1434" fill="#909094"/><rect x="848" y="1434" fill="#a4a4a6"/><rect x="880" y="1434" fill="#ececec"/><rect x="928" y="1434" fill="#f0f0f0"/><rect x="960" y="1434" fill="#a8a8ac"/><rect x="992" y="1434" fill="#808288"/><rect x="1008" y="1434" fill="#e2e2e4"/><rect x="1040" y="1434" fill="#f4f4f4"/><rect x="1056" y="1434" fill="#d8d8d8"/><rect x="1152" y="1434" fill="#848a9c"/>
          <rect x="736" y="1450" fill="#c4c4c4"/><rect x="864" y="1450" fill="#2a2e3c"/><rect x="944" y="1450" fill="#101828"/><rect x="976" y="1450" fill="#767880"/><rect x="992" y="1450" fill="#60646e"/><rect x="1008" y="1450" fill="#262c3c"/><rect x="1040" y="1450" fill="#d8d8da"/><rect x="1056" y="1450" fill="#5a5c66"/><rect x="1072" y="1450" fill="#cccccc"/><rect x="1088" y="1450" fill="#fafafa"/><rect x="1104" y="1450" fill="#646872"/><rect x="1152" y="1450" fill="#f6f6f8"/>
          <rect x="688" y="1562" fill="#fafafa"/><rect x="752" y="1562" fill="#acacb0"/><rect x="768" y="1562" fill="#fafafa"/><rect x="1088" y="1562" fill="#e8eaea"/>
          <rect x="704" y="1578" fill="#c8c8cc"/><rect x="720" y="1578" fill="#909094"/><rect x="736" y="1578" fill="#909094"/><rect x="768" y="1578" fill="#909094"/><rect x="784" y="1578" fill="#f4f4f4"/><rect x="800" y="1578" fill="#dcdcdc"/><rect x="816" y="1578" fill="#88888c"/><rect x="832" y="1578" fill="#343844"/><rect x="864" y="1578" fill="#b4b4b4"/><rect x="880" y="1578" fill="#dcdcdc"/><rect x="928" y="1578" fill="#101c30"/><rect x="944" y="1578" fill="#4a4c54"/><rect x="1008" y="1578" fill="#202a3a"/><rect x="1024" y="1578" fill="#4a4e5a"/><rect x="1040" y="1578" fill="#101828"/><rect x="1088" y="1578" fill="#d4d6da"/><rect x="1152" y="1578" fill="#f6f6f6"/>
          <rect x="1040" y="1594" fill="#a0a0a2"/><rect x="1104" y="1594" fill="#acacae"/>
        </svg>
      </section>
    </main>
  </div>
</div>
</body>
</html>
```
FILE: styles.css
```css
* { box-sizing: border-box; }
html, body { margin: 0; padding: 0; }
body { width: 3420px; height: 1962px; overflow: hidden; background: #f9fafb; font-family: "Inter", "Liberation Sans", sans-serif; color: #344054; }
a { color: inherit; text-decoration: none; }
button { font: inherit; margin: 0; cursor: pointer; }
.defs { position: absolute; width: 0; height: 0; }
.app { display: flex; height: 1962px; }

/* Sidebar */
.sidebar { position: relative; flex: 0 0 448px; height: 1962px; background: #2e3748; display: flex; flex-direction: column; font-family: "Roboto", "Liberation Sans", sans-serif; color: #bfc2cb; }
.logo { height: 136px; display: flex; align-items: flex-start; justify-content: center; gap: 2px; padding-top: 47px; padding-right: 1px; }
.logo-mark { width: 34px; height: 28px; margin-top: 1px; }
.logo-text { font-family: "Inter", sans-serif; font-size: 26px; font-weight: 600; line-height: 36px; letter-spacing: -1.1px; color: #fff; }
.account { margin: 0 16px; height: 82px; background: #4d5665; border-radius: 18px 18px 0 18px; overflow: hidden; }
.account .mosaic { display: block; }
.mosaic rect { width: 16px; height: 16px; }
.mosaic rect.thin { width: 13px; }
.quick { display: flex; gap: 12px; margin: 33px 16px 0; height: 56px; }
.side-search { flex: 1; display: flex; align-items: center; background: #4d5665; border: 2px solid #626a78; border-radius: 14px; padding: 0 8px 0 12px; font-family: "Inter", sans-serif; }
.side-search-icon { width: 26px; height: 26px; color: #9ca3af; }
.side-search-text { margin-left: 11px; font-size: 26px; color: #9ca3af; flex: 1; }
.kbd { width: 53px; height: 32px; background: #9ca3af; border-radius: 5px; color: #000; font: 400 24px/32px "Roboto", "DejaVu Sans", sans-serif; text-align: center; }
.bolt-btn { flex: 0 0 56px; background: #3c4555; border: 2px solid #566070; border-radius: 14px; display: flex; align-items: center; justify-content: center; }
.nav { height: 1471px; margin-top: 47px; overflow: hidden; flex: none; }
.nav-item { position: relative; display: flex; align-items: center; gap: 18px; height: 72px; padding: 0 32px 0 34px; font-size: 28px; font-weight: 500; color: #bfc2cb; }
.nav-icon { flex: 0 0 36px; width: 36px; height: 36px; overflow: visible; }
.i-stroke { fill: none; stroke: currentColor; stroke-width: 2.300; stroke-linecap: round; stroke-linejoin: round; }
.i-fill { fill: currentColor; }
.opp { stroke-width: 2.800; }
.launch { fill: none; stroke-width: 3; }
.launch-arrow { stroke-width: 2; stroke-linejoin: round; }
.pay-sign { font: 700 15px "Roboto", sans-serif; fill: currentColor; stroke: none; }
.gear-thin { stroke-width: 1.600; }
.nav-divider { height: 2px; margin: 32px 32px; background: #e4e7ec; }
.side-beta { margin-left: auto; width: 59px; height: 34px; background: #c29224; border: 1px solid #a37a1c; border-radius: 6px; color: #1e2d4a; font-size: 20px; font-weight: 500; line-height: 32px; text-align: center; }
.is-active { height: 72px; background: #181e2a; color: #fff; border-radius: 0 16px 16px 0; }
.side-mark { position: absolute; left: 0; top: 0; width: 330px; height: 70px; border: 6px solid #ff2a1c; box-shadow: 0 3px 5px rgba(0,0,0,.35); }
.nav-settings { margin-top: 37px; }
.collapse { position: absolute; left: 424px; top: 1882px; width: 40px; height: 40px; padding: 0; border: 0; border-radius: 50%; background: #2fd195; display: flex; align-items: center; justify-content: center; }
.collapse svg { fill: none; stroke: #0e5c44; stroke-width: 3.500; stroke-linecap: round; stroke-linejoin: round; margin-right: 3px; }

/* Topbar */
.main { flex: 1; min-width: 0; display: flex; flex-direction: column; }
.topbar { height: 172px; background: #fff; box-shadow: 0 2px 6px rgba(64,84,90,.28); position: relative; z-index: 1; }
.top-row { height: 84px; display: flex; justify-content: flex-end; align-items: flex-start; padding: 10px 30px 0 0; }
.news { position: relative; margin-top: 2px; width: 498px; height: 60px; background: #eff4fe; border-radius: 30px; display: flex; align-items: center; padding: 0 6px 0 24px; box-shadow: 0 2px 4px rgba(16,24,40,.05); font-size: 24px; font-weight: 500; }
.news-icon { width: 32px; height: 32px; fill: none; stroke: #155eef; stroke-width: 2; stroke-linejoin: round; }
.news-label { margin-left: 17px; color: #155eef; }
.news-pill { margin-left: auto; width: 267px; height: 44px; background: #155eef; color: #fff; border-radius: 22px; line-height: 44px; text-align: center; }
.news-dot { position: absolute; right: -4px; top: -4px; width: 16px; height: 16px; border-radius: 50%; background: #d92d20; }
.actions { display: flex; gap: 20px; margin-left: 124px; }
.round { position: relative; width: 64px; height: 64px; border-radius: 50%; display: flex; align-items: center; justify-content: center; color: #fff; }
.round svg { fill: #fff; }
.round-phone { background: #059b5b; }
.round-phone svg { fill: none; stroke: #fff; stroke-width: 1.500; stroke-linejoin: round; }
.round-mega { background: #46997e; }
.round-bell { background: #ff6a00; }
.round-help { background: #1c8ff8; font-size: 30px; font-weight: 500; }
.round-user { background: #b97cbc; font-size: 26px; color: #f4e6f4; }
.ask-ai { width: 166px; height: 64px; border-radius: 32px; background: linear-gradient(#6d2fe8, #2a0f66); border: 2px solid #4a1fa8; color: #fff; font-size: 28px; font-weight: 500; display: flex; align-items: center; justify-content: center; gap: 8px; }
.ask-ai svg { fill: #fff; }
.mark { position: absolute; border-radius: 50%; }
.mark-red { right: -2px; top: 0; width: 22px; height: 22px; background: #f00; border: 2px solid #fff; }
.mark-yellow { right: 4px; top: 4px; width: 16px; height: 16px; background: #ffb800; }
.nav-row { height: 88px; display: flex; align-items: center; padding: 0 0 8px 33px; font-size: 26px; font-weight: 500; color: #475467; }
.app-title { font-size: 34px; font-weight: 500; color: #1d2939; margin-top: -8px; margin-right: 17px; }
.tab-marked { flex: none; width: 215px; height: 93px; margin-top: -3px; padding-bottom: 3px; border: 6px solid #ff2a1c; box-shadow: 0 3px 5px rgba(60,60,60,.4); display: flex; align-items: center; justify-content: center; color: #3b9fe0; font-weight: 400; }
.top-link { position: relative; margin-left: 47px; }
.top-link-first { margin-left: 4px; }
.top-beta { position: absolute; left: 83px; top: -27px; width: 58px; height: 26px; background: #fdb400; border: 1px solid #b58106; border-radius: 6px; color: #1d2939; font-size: 17px; font-weight: 500; line-height: 24px; text-align: center; }
.top-sep { width: 2px; height: 56px; margin: 0 35px 0 34px; background: #d0d5dd; }
.top-gear { width: 36px; height: 36px; fill: none; stroke: #667085; stroke-width: 1.300; stroke-linecap: round; stroke-linejoin: round; }
.top-settings { margin-left: 17px; }

/* Content */
.content { flex: 1; padding: 70px 64px 0; }
.page-head { display: flex; justify-content: space-between; align-items: center; height: 80px; }
.page-title { margin: 0; padding-top: 3px; font-size: 56px; font-weight: 500; color: #0a0a0a; letter-spacing: -1.100px; line-height: 80px; }
.page-actions { display: flex; gap: 18px; }
.btn { height: 80px; border-radius: 16px; display: flex; align-items: center; font-size: 28px; font-weight: 500; padding: 0 0 0 32px; gap: 18px; box-shadow: 0 2px 3px rgba(16,24,40,.06); }
.btn-icon { width: 30px; height: 30px; fill: none; stroke: currentColor; stroke-width: 2.200; stroke-linejoin: round; stroke-linecap: round; }
.btn-plain { width: 284px; gap: 15px; background: #fff; border: 2px solid #d0d5dd; color: #344054; }
.btn-ai { width: 304px; gap: 15px; background: #f3e9fd; border: 2px solid #7a2ff0; color: #7a2ff0; padding-left: 34px; }
.btn-ai .btn-icon { width: 38px; height: 38px; }
.btn-primary { width: 324px; background: #155eef; border: 2px solid #0f55e0; color: #fff; padding-left: 32px; }
.btn-primary .btn-icon { width: 24px; height: 24px; }
.tabs { display: flex; align-items: flex-start; height: 80px; margin-top: 30px; border-bottom: 2px solid #eaecf0; font-size: 28px; font-weight: 400; color: #667085; }
.tab { height: 78px; display: flex; align-items: center; padding: 2px 25px 0; margin-right: 22px; border-bottom: 4px solid transparent; margin-bottom: -2px; }
.tab.is-current { color: #155eef; border-bottom-color: #2f6ff5; padding: 2px 24px 0 25px; margin-right: 22px; }
.tab-sep { width: 2px; height: 40px; margin: 15px 38px 0 16px; background: #d0d5dd; }
.tab-add { display: flex; align-items: center; gap: 23px; height: 68px; color: #475467; }
.tab-add svg { fill: none; stroke: #667085; stroke-width: 3; }
.customize { margin-left: auto; display: flex; align-items: center; gap: 26px; height: 70px; font-size: 28.500px; color: #b2b7c4; }
.customize svg { fill: none; stroke: #b2b7c4; stroke-width: 3; }
.toolbar { display: flex; justify-content: space-between; align-items: center; margin-top: 17px; height: 78px; }
.filter-pill { height: 57px; width: 286px; display: flex; align-items: center; gap: 8px; padding: 0 0 0 16px; background: #fff; border: 2px solid #e4e7ec; border-radius: 29px; font-size: 28px; color: #344054; }
.filter-pill svg { fill: none; stroke: #344054; stroke-width: 1.800; stroke-linejoin: round; }
.toolbar-right { display: flex; gap: 18px; }
.icon-btn, .seg { width: 102px; height: 78px; padding: 0; display: flex; align-items: center; justify-content: center; background: #fff; }
.icon-btn { border: 2px solid #d0d5dd; border-radius: 16px; box-shadow: 0 2px 3px rgba(16,24,40,.06); }
.clock { width: 36px; height: 36px; fill: none; stroke: #344054; stroke-width: 3; stroke-linecap: round; stroke-linejoin: round; }
.clock .filled { fill: #344054; stroke: none; }
.segmented { display: flex; width: 206px; height: 78px; border: 2px solid #d0d5dd; border-radius: 16px; overflow: hidden; box-shadow: 0 2px 3px rgba(16,24,40,.06); }
.seg { flex: 1; width: auto; height: 74px; border: 0; }
.seg.is-on { background: #f2f4f7; border-left: 2px solid #d0d5dd; }
.list-i { width: 36px; height: 36px; fill: #344054; }
.search { width: 474px; height: 78px; margin-left: 4px; background: #fff; border: 2px solid #e4e7ec; border-radius: 16px; display: flex; align-items: center; gap: 8px; padding-left: 28px; font-size: 30px; color: #667085; box-shadow: 0 2px 3px rgba(16,24,40,.05); }
.search svg { fill: none; stroke: #344054; stroke-width: 2.400; stroke-linecap: round; }
.crumb { padding: 25px 0 12px 40px; font-size: 28px; line-height: 38px; color: #344054; }

/* Table card */
.card { position: relative; height: 1208px; background: #fff; border: 2px solid #eaecf0; border-radius: 16px; box-shadow: 0 2px 5px rgba(16,24,40,.1); font-size: 25px; color: #475467; }
.row { display: grid; grid-template-columns: 129px 704px 242px 308px 309px 397px 395px 206px 1fr; align-items: center; height: 134px; padding-left: 51px; border-bottom: 2px solid #eaecf0; }
.row-tall { height: 156px; }
.row-head { height: 85px; padding-bottom: 2px; background: #f9fafb; border-radius: 14px 14px 0 0; font-size: 24px; font-weight: 500; color: #667085; }
.select { display: flex; align-items: center; }
.check { width: 32px; height: 32px; background: #fff; border: 2px solid #e4e7ec; border-radius: 5px; }
.head-chev { width: 18px; height: 12px; margin-left: 35px; fill: none; stroke: #667085; stroke-width: 1.700; }
.stats-head { display: flex; align-items: center; gap: 8px; }
.stats-head svg { fill: none; stroke: #667085; stroke-width: 1.500; stroke-linecap: round; }
.num { color: #155eef; }
.pill { display: inline-flex; align-items: center; height: 56px; padding: 0 17px; background: #f9fafb; border: 2px solid #e4e7ec; border-radius: 28px; font-size: 24px; font-weight: 500; color: #344054; }
.pill-pub { background: #ecfdf3; border-color: #32d583; color: #12b76a; }
.go { width: 22px; height: 22px; margin-left: 30px; fill: none; stroke: #344054; stroke-width: 1.800; stroke-linecap: round; stroke-linejoin: round; display: block; }
.more { width: 8px; height: 28px; fill: #101828; display: block; }
.pager { display: flex; align-items: center; justify-content: flex-end; height: 71px; margin-top: 60px; padding-right: 48px; font-size: 28px; font-weight: 500; color: #344054; }
.page-btn { height: 71px; padding: 0 26px; background: #fff; border: 2px solid #d0d5dd; border-radius: 16px; font-weight: 500; color: #344054; box-shadow: 0 1px 2px rgba(16,24,40,.06); }
.page-next { width: 116px; padding: 0; }
.page-btn.is-disabled { width: 171px; padding: 0; border-color: #e9ebf0; color: #98a2b3; box-shadow: none; margin-right: 28px; }
.page-num { width: 56px; height: 55px; padding: 0; background: #fff; border: 2px solid transparent; border-radius: 4px; font-weight: 400; color: #344054; }
.page-num.is-current { border-color: #155eef; color: #155eef; margin-right: -12px; }
.page-num + .page-num { margin-left: 27px; margin-right: 28px; }
.per-page { display: flex; align-items: center; justify-content: space-between; width: 198px; height: 55px; margin-left: 27px; padding: 0 14px 0 24px; border: 2px solid #e4e7ec; border-radius: 4px; font-weight: 400; }
.per-page svg { fill: none; stroke: #c4c8d0; stroke-width: 1.600; }
.redaction { position: absolute; left: 145px; top: 0; pointer-events: none; }
```
